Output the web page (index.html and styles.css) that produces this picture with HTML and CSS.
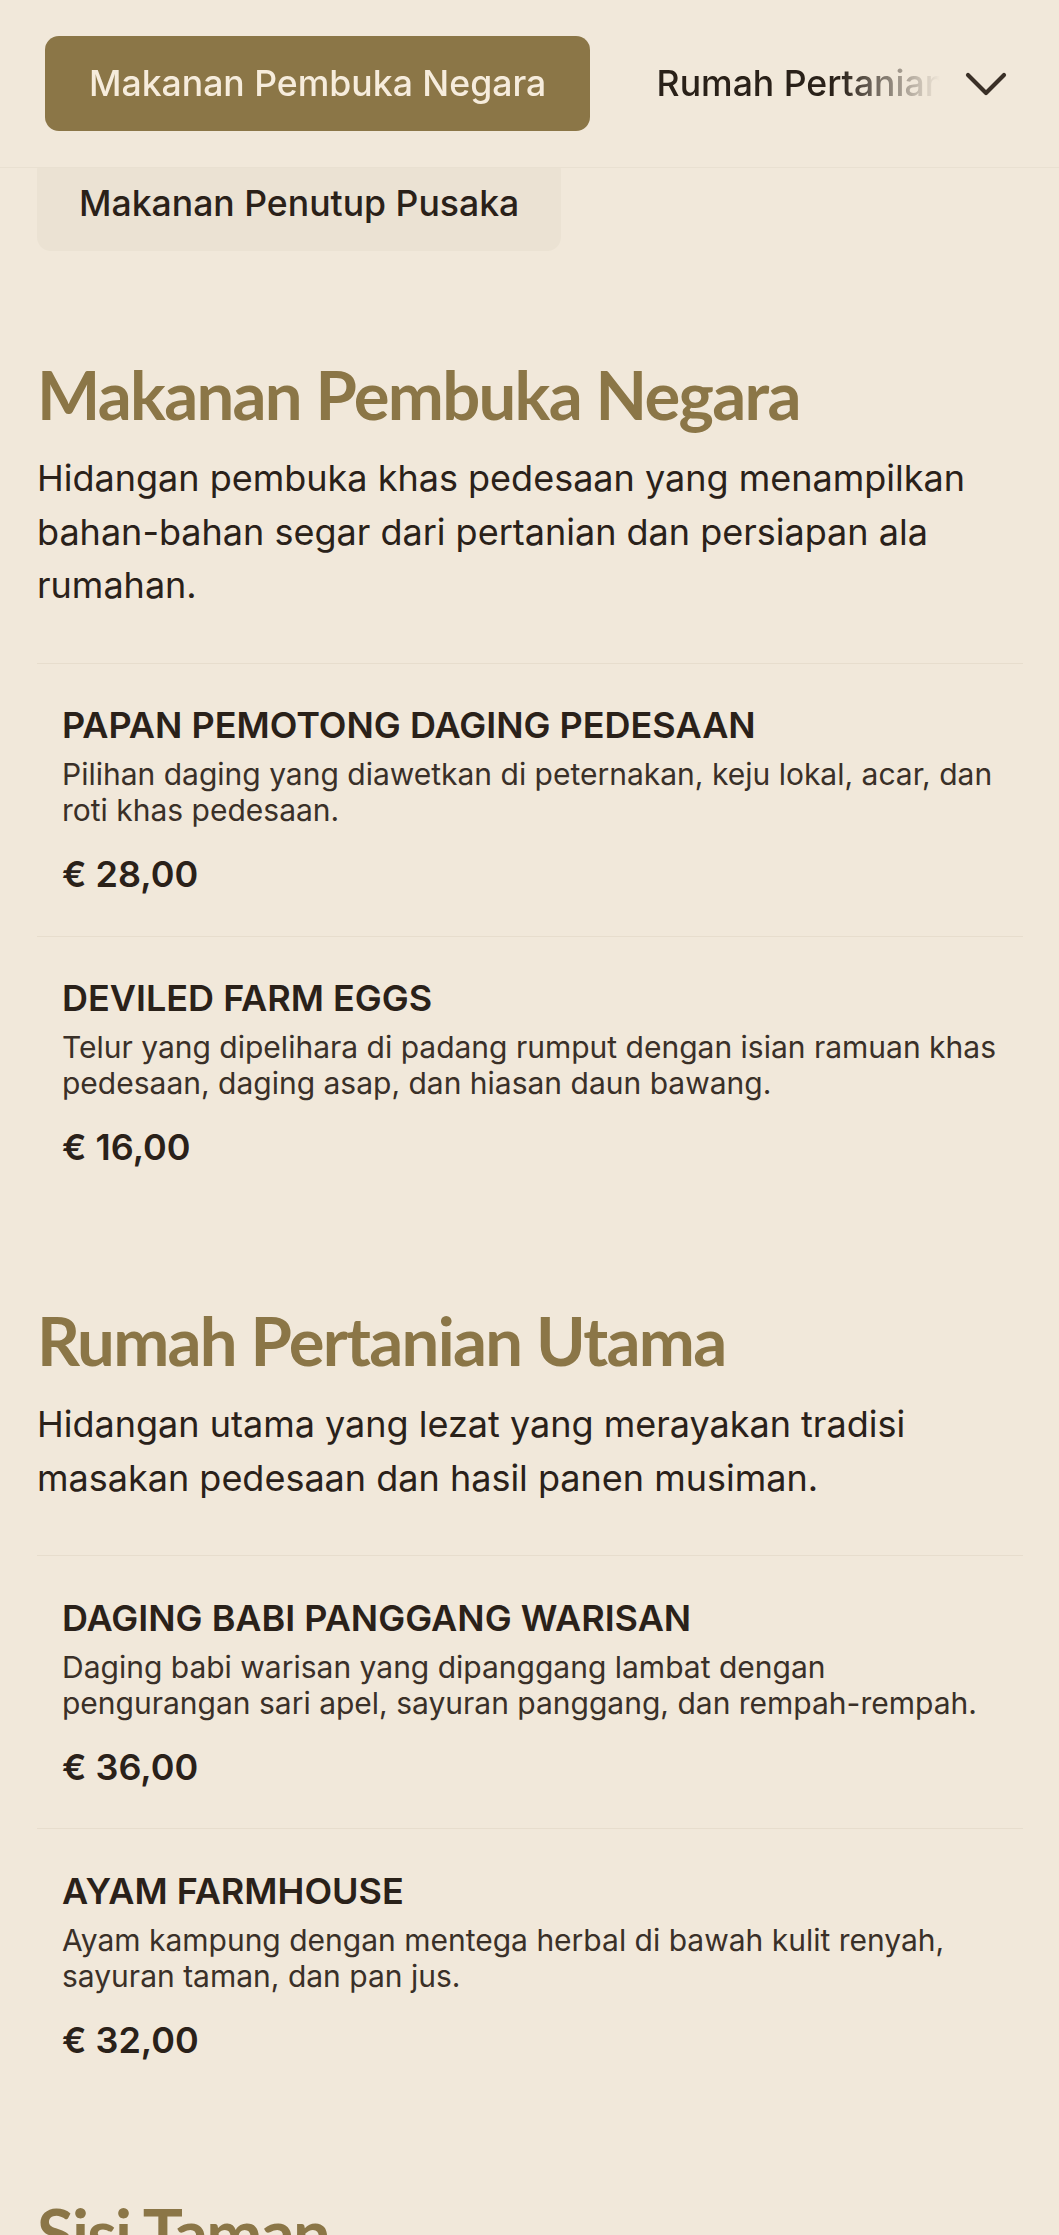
FILE: index.html
```html
<!DOCTYPE html>
<html lang="id">
<head>
<meta charset="utf-8">
<title>Menu</title>
<link rel="stylesheet" href="styles.css">
</head>
<body>
<header class="topbar">
  <nav class="tabs">
    <a class="tab tab-active">Makanan Pembuka Negara</a>
    <a class="tab">Rumah Pertanian Utama</a>
    <a class="tab">Sisi Taman</a>
    <a class="tab">Makanan Penutup Pusaka</a>
  </nav>
  <button class="toggle" aria-label="Tampilkan semua kategori">
    <svg width="44" height="28" viewBox="0 0 44 28" fill="none"><polyline points="4,5 22,23 40,5" stroke="#3a3027" stroke-width="4.2" stroke-linecap="round" stroke-linejoin="round"/></svg>
  </button>
</header>
<main class="content">
  <div class="menu-panel">
    <a class="panel-item">Makanan Penutup Pusaka</a>
  </div>

  <section class="category category-first">
    <h2 class="category-title">Makanan Pembuka Negara</h2>
    <p class="category-desc">Hidangan pembuka khas pedesaan yang menampilkan bahan-bahan segar dari pertanian dan persiapan ala rumahan.</p>
    <div class="items">
      <article class="item">
        <h3 class="item-name">PAPAN PEMOTONG DAGING PEDESAAN</h3>
        <p class="item-desc">Pilihan daging yang diawetkan di peternakan, keju lokal, acar, dan roti khas pedesaan.</p>
        <p class="item-price">€ 28,00</p>
      </article>
      <article class="item">
        <h3 class="item-name">DEVILED FARM EGGS</h3>
        <p class="item-desc">Telur yang dipelihara di padang rumput dengan isian ramuan khas pedesaan, daging asap, dan hiasan daun bawang.</p>
        <p class="item-price">€ 16,00</p>
      </article>
    </div>
  </section>

  <section class="category">
    <h2 class="category-title">Rumah Pertanian Utama</h2>
    <p class="category-desc">Hidangan utama yang lezat yang merayakan tradisi masakan pedesaan dan hasil panen musiman.</p>
    <div class="items">
      <article class="item">
        <h3 class="item-name">DAGING BABI PANGGANG WARISAN</h3>
        <p class="item-desc">Daging babi warisan yang dipanggang lambat dengan pengurangan sari apel, sayuran panggang, dan rempah-rempah.</p>
        <p class="item-price">€ 36,00</p>
      </article>
      <article class="item">
        <h3 class="item-name">AYAM FARMHOUSE</h3>
        <p class="item-desc">Ayam kampung dengan mentega herbal di bawah kulit renyah, sayuran taman, dan pan jus.</p>
        <p class="item-price">€ 32,00</p>
      </article>
    </div>
  </section>

  <section class="category">
    <h2 class="category-title">Sisi Taman</h2>
  </section>
</main>
</body>
</html>
```
FILE: styles.css
```css
html, body {
  margin: 0;
  padding: 0;
}

body {
  background: #f1e8da;
  font-family: Inter, "Noto Sans", sans-serif;
  color: #2a2119;
}

.topbar {
  position: sticky;
  top: 0;
  z-index: 2;
  display: flex;
  align-items: center;
  padding: 36px 0 36px 45px;
  background: #f1e8da;
  border-bottom: 1px solid #e9e0d1;
}

.tabs {
  flex: 1;
  min-width: 0;
  display: flex;
  gap: 22.4px;
  overflow: hidden;
  -webkit-mask-image: linear-gradient(to right, #000 calc(100% - 100px), transparent 100%);
  mask-image: linear-gradient(to right, #000 calc(100% - 100px), transparent 100%);
}

.tab {
  flex: none;
  padding: 20.5px 44px;
  font-size: 35.6px;
  line-height: 54px;
  font-weight: 500;
  color: #2a2119;
  border-radius: 14px;
  white-space: nowrap;
}

.tab-active {
  background: #8b7647;
  color: #f6ecdc;
}

.toggle {
  flex: none;
  width: 92px;
  height: 95px;
  margin-right: 27px;
  padding: 0;
  border: 0;
  background: none;
  display: flex;
  align-items: center;
  justify-content: center;
}

.content {
  padding: 0 36px 0 37px;
}

.menu-panel {
  display: flex;
  align-items: flex-start;
  margin-top: -11.6px;
}

.panel-item {
  padding: 20.5px 42px;
  font-size: 35.6px;
  line-height: 54px;
  font-weight: 500;
  color: #2a2119;
  background: #ebe2d3;
  border-radius: 14px;
}

.category {
  margin-top: 91px;
}

.category-first {
  margin-top: 102.6px;
}

.category-title {
  margin: 0;
  font-family: Lato, "Open Sans", sans-serif;
  font-weight: 700;
  font-size: 67px;
  line-height: 80.4px;
  letter-spacing: -1.7px;
  color: #8b7647;
}

.category-desc {
  margin: 17.8px 0 0;
  font-size: 36px;
  line-height: 53.5px;
  color: #2a2119;
}

.items {
  margin-top: 50.3px;
}

.item {
  border-top: 1px solid #e7ddcd;
  padding: 40.3px 16px 39.5px 25px;
}

.item-name {
  margin: 0;
  font-size: 36px;
  line-height: 43.2px;
  font-weight: 600;
  color: #2a2119;
}

.item-desc {
  margin: 8.6px 0 0;
  font-size: 30px;
  line-height: 36px;
  color: #3a3028;
}

.item-price {
  margin: 25.2px 0 0;
  font-size: 36px;
  line-height: 43.2px;
  font-weight: 600;
  color: #2a2119;
}
```
